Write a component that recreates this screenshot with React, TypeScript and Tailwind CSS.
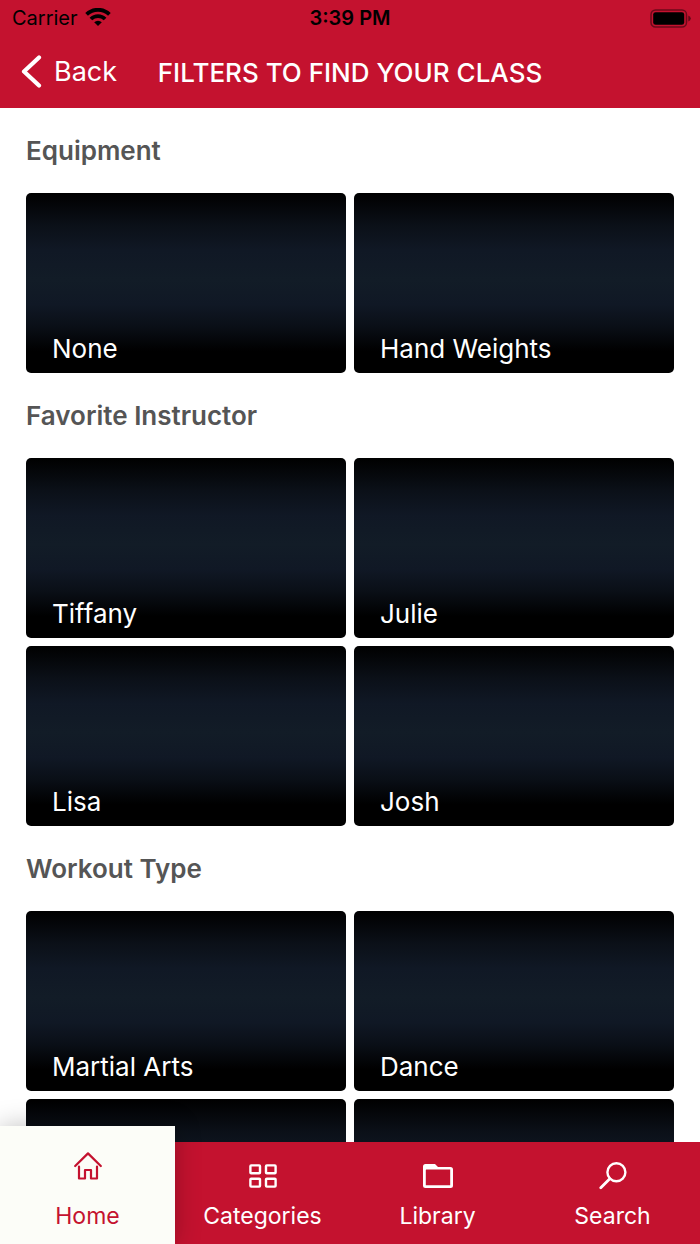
import { ReactNode, useState } from 'react';

type Section = {
  title: string;
  options: string[];
  loading?: number;
};

const sections: Section[] = [
  { title: 'Equipment', options: ['None', 'Hand Weights'] },
  { title: 'Favorite Instructor', options: ['Tiffany', 'Julie', 'Lisa', 'Josh'] },
  { title: 'Workout Type', options: ['Martial Arts', 'Dance'], loading: 2 },
];

const tabs: { name: string; icon: ReactNode }[] = [
  { name: 'Home', icon: <HomeIcon /> },
  { name: 'Categories', icon: <GridIcon /> },
  { name: 'Library', icon: <FolderIcon /> },
  { name: 'Search', icon: <SearchIcon /> },
];

function HomeIcon() {
  return (
    <svg width="28" height="28" viewBox="0 0 28 28" fill="none" stroke="currentColor" strokeWidth="2.2" strokeLinecap="round" strokeLinejoin="round">
      <path d="M1.2 14 14 1.4 26.8 14" />
      <path d="M5 14.5V26.5H11V18H17V26.5H23V14.5" />
    </svg>
  );
}

function GridIcon() {
  return (
    <svg width="28" height="24" viewBox="0 0 28 24" fill="none" stroke="currentColor" strokeWidth="2.4">
      <rect x="1.4" y="1.4" width="9.6" height="7.8" rx="0.8" />
      <rect x="17" y="1.4" width="9.6" height="7.8" rx="0.8" />
      <rect x="1.4" y="14.8" width="9.6" height="7.8" rx="0.8" />
      <rect x="17" y="14.8" width="9.6" height="7.8" rx="0.8" />
    </svg>
  );
}

function FolderIcon() {
  return (
    <svg width="30" height="24" viewBox="0 0 30 24" fill="currentColor">
      <path
        fillRule="evenodd"
        d="M2.5 0H12L15 3H27.5A2.5 2.5 0 0 1 30 5.5V21.5A2.5 2.5 0 0 1 27.5 24H2.5A2.5 2.5 0 0 1 0 21.5V2.5A2.5 2.5 0 0 1 2.5 0ZM3.2 5.6A0.4 0.4 0 0 0 2.8 6V21.2H27.2V5.6Z"
      />
    </svg>
  );
}

function SearchIcon() {
  return (
    <svg width="28" height="28" viewBox="0 0 28 28" fill="none" stroke="currentColor" strokeWidth="2.4" strokeLinecap="round">
      <circle cx="17.4" cy="10.2" r="9" />
      <path d="M10.8 16.8 1.8 25.8" strokeWidth="2.8" />
    </svg>
  );
}

function WifiIcon() {
  return (
    <svg width="26" height="20" viewBox="0 0 26 20" fill="none" stroke="currentColor" strokeWidth="3.8">
      <path d="M1.6 6.4A16.3 16.3 0 0 1 24.4 6.4" />
      <path d="M5.9 11A10 10 0 0 1 20.1 11" />
      <path d="M13 18 9.2 14.2A5.4 5.4 0 0 1 16.8 14.2Z" fill="currentColor" stroke="none" />
    </svg>
  );
}

function BatteryIcon() {
  return (
    <svg width="42" height="19" viewBox="0 0 42 19">
      <rect x="1" y="1" width="35.5" height="17" rx="4.5" fill="none" stroke="#000" strokeOpacity="0.45" strokeWidth="1.5" />
      <rect x="3.2" y="3.2" width="31" height="12.6" rx="2.4" />
      <path d="M38.3 6.5Q40.8 7.5 40.8 9.5T38.3 12.5Z" fillOpacity="0.5" />
    </svg>
  );
}

function StatusBar() {
  return (
    <div className="grid h-9 grid-cols-3 items-center px-3 text-[20px] text-black">
      <div className="flex items-center gap-[7px]">
        <span>Carrier</span>
        <WifiIcon />
      </div>
      <span className="text-center font-semibold">3:39 PM</span>
      <div className="-mr-1 flex justify-end">
        <BatteryIcon />
      </div>
    </div>
  );
}

function Header() {
  return (
    <header className="shrink-0 bg-[#c4122f] text-white">
      <StatusBar />
      <div className="grid h-[72px] grid-cols-[1fr_auto_1fr] items-center px-5">
        <button type="button" className="flex items-center gap-3 text-[27px]">
          <svg width="22" height="34" viewBox="0 0 22 34" fill="none" stroke="currentColor" strokeWidth="4.2" strokeLinecap="round" strokeLinejoin="round">
            <path d="M19 2.5 4 16.5 19 30.5" />
          </svg>
          Back
        </button>
        <h1 className="text-[26px] font-medium whitespace-nowrap">FILTERS TO FIND YOUR CLASS</h1>
      </div>
    </header>
  );
}

const tileClass =
  'flex h-[180px] items-end rounded-[5px] bg-linear-[to_bottom,#000_0%,#0b1018_18%,#101825_32%,#121c27_48%,#101825_62%,#0a0f17_74%,#000_88%] px-[26px] pb-2 text-left text-[26px] leading-8 text-white';

function FilterSection({ title, options, loading = 0 }: Section) {
  return (
    <section className="px-[26px]">
      <h2 className="flex h-[85px] items-center text-[26px] font-semibold text-[#555]">{title}</h2>
      <div className="grid grid-cols-2 gap-2">
        {options.map((option) => (
          <button key={option} type="button" className={tileClass}>
            {option}
          </button>
        ))}
        {Array.from({ length: loading }, (_, i) => (
          <div key={i} className={tileClass} />
        ))}
      </div>
    </section>
  );
}

function TabBar() {
  const [active, setActive] = useState('Home');

  return (
    <nav className="z-10 grid h-[102px] shrink-0 grid-cols-4 bg-[#c4122f] text-[23px]">
      {tabs.map(({ name, icon }) => (
        <button
          key={name}
          type="button"
          onClick={() => setActive(name)}
          className={
            active === name
              ? '-mt-4 flex flex-col items-center justify-end bg-[#fcfdf8] pb-3 text-[#c4122f] shadow-[0_0_24px_rgba(0,0,0,0.25)]'
              : 'flex flex-col items-center justify-end pb-3 text-white'
          }
        >
          <span className={active === name ? 'flex h-12 items-start' : 'flex h-12 items-center'}>{icon}</span>
          <span className="leading-8">{name}</span>
        </button>
      ))}
    </nav>
  );
}

export default function App() {
  return (
    <div className="flex h-screen flex-col bg-white font-['Inter','Liberation_Sans',sans-serif]">
      <Header />
      <main className="min-h-0 flex-1 overflow-y-auto [scrollbar-width:none]">
        {sections.map((section) => (
          <FilterSection key={section.title} {...section} />
        ))}
      </main>
      <TabBar />
    </div>
  );
}
